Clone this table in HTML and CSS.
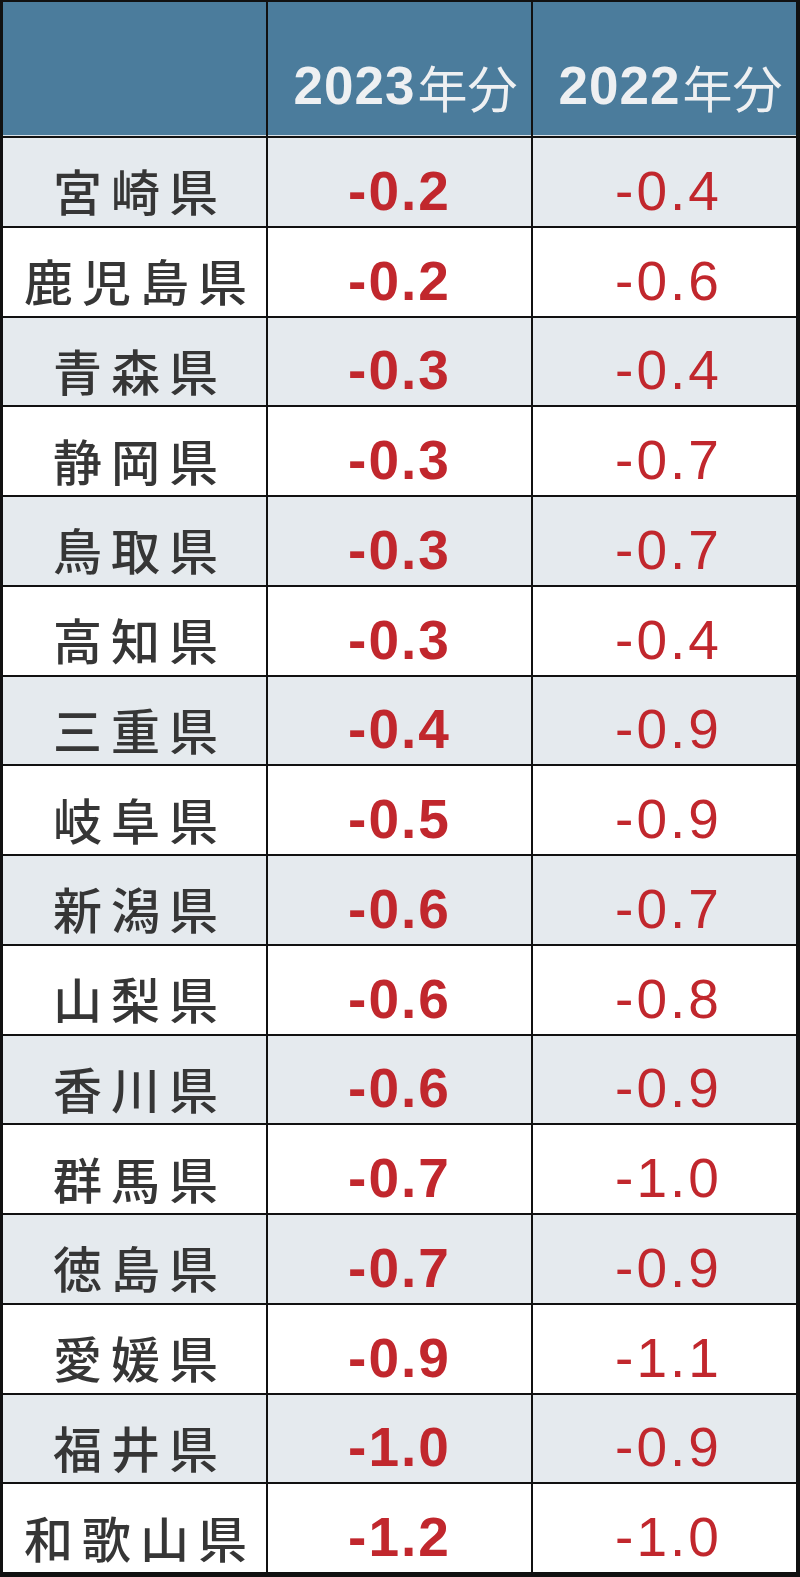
FILE: index.html
```html
<!DOCTYPE html>
<html lang="ja">
<head>
<meta charset="utf-8">
<title>都道府県別</title>
<link rel="stylesheet" href="styles.css">
</head>
<body>
<div class="table">
  <div class="hd"></div>
  <div class="hd"><span class="yr">2023</span><span class="jp">年分</span></div>
  <div class="hd"><span class="yr">2022</span><span class="jp">年分</span></div>

  <div class="name alt">宮崎県</div><div class="v23 alt">-0.2</div><div class="v22 alt">-0.4</div>
  <div class="name">鹿児島県</div><div class="v23">-0.2</div><div class="v22">-0.6</div>
  <div class="name alt">青森県</div><div class="v23 alt">-0.3</div><div class="v22 alt">-0.4</div>
  <div class="name">静岡県</div><div class="v23">-0.3</div><div class="v22">-0.7</div>
  <div class="name alt">鳥取県</div><div class="v23 alt">-0.3</div><div class="v22 alt">-0.7</div>
  <div class="name">高知県</div><div class="v23">-0.3</div><div class="v22">-0.4</div>
  <div class="name alt">三重県</div><div class="v23 alt">-0.4</div><div class="v22 alt">-0.9</div>
  <div class="name">岐阜県</div><div class="v23">-0.5</div><div class="v22">-0.9</div>
  <div class="name alt">新潟県</div><div class="v23 alt">-0.6</div><div class="v22 alt">-0.7</div>
  <div class="name">山梨県</div><div class="v23">-0.6</div><div class="v22">-0.8</div>
  <div class="name alt">香川県</div><div class="v23 alt">-0.6</div><div class="v22 alt">-0.9</div>
  <div class="name">群馬県</div><div class="v23">-0.7</div><div class="v22">-1.0</div>
  <div class="name alt">徳島県</div><div class="v23 alt">-0.7</div><div class="v22 alt">-0.9</div>
  <div class="name">愛媛県</div><div class="v23">-0.9</div><div class="v22">-1.1</div>
  <div class="name alt">福井県</div><div class="v23 alt">-1.0</div><div class="v22 alt">-0.9</div>
  <div class="name">和歌山県</div><div class="v23">-1.2</div><div class="v22">-1.0</div>
</div>
</body>
</html>
```

FILE: styles.css
```css
html, body {
  margin: 0;
  padding: 0;
  background: #ffffff;
}

.table {
  box-sizing: border-box;
  width: 800px;
  height: 1577px;
  padding: 2px 4px 5px 3px;
  background: #111111;
  display: grid;
  grid-template-columns: 263px 263px 263px;
  grid-template-rows: 134px repeat(16, 1fr);
  gap: 2px;
}

.table > div {
  display: flex;
  align-items: center;
  justify-content: center;
  background: #ffffff;
  box-sizing: border-box;
}

.table > .alt {
  background: #e5eaee;
}

.table > .hd {
  background: #4b7c9c;
  color: #eef0f2;
  padding-top: 34px;
  padding-left: 12px;
  border-bottom: 1px solid #d8e0e6;
}

.yr {
  font-family: "Liberation Sans", Arial, sans-serif;
  font-weight: 700;
  font-size: 53px;
  letter-spacing: 1px;
}

.jp {
  font-family: "Noto Sans CJK JP", sans-serif;
  font-weight: 400;
  font-size: 50px;
  line-height: 1;
  margin-left: 2px;
}

.name {
  font-family: "Noto Sans CJK JP", sans-serif;
  font-weight: 500;
  font-size: 49px;
  letter-spacing: 9px;
  text-indent: 11px;
  color: #363636;
  padding-top: 16px;
}

.v23, .v22 {
  font-family: "Liberation Sans", Arial, sans-serif;
  font-size: 55px;
  letter-spacing: 2px;
  color: #c1272d;
  padding-top: 18px;
}

.v23 {
  font-weight: 700;
}

.v22 {
  font-weight: 400;
  letter-spacing: 3px;
  text-indent: 8px;
}
```
